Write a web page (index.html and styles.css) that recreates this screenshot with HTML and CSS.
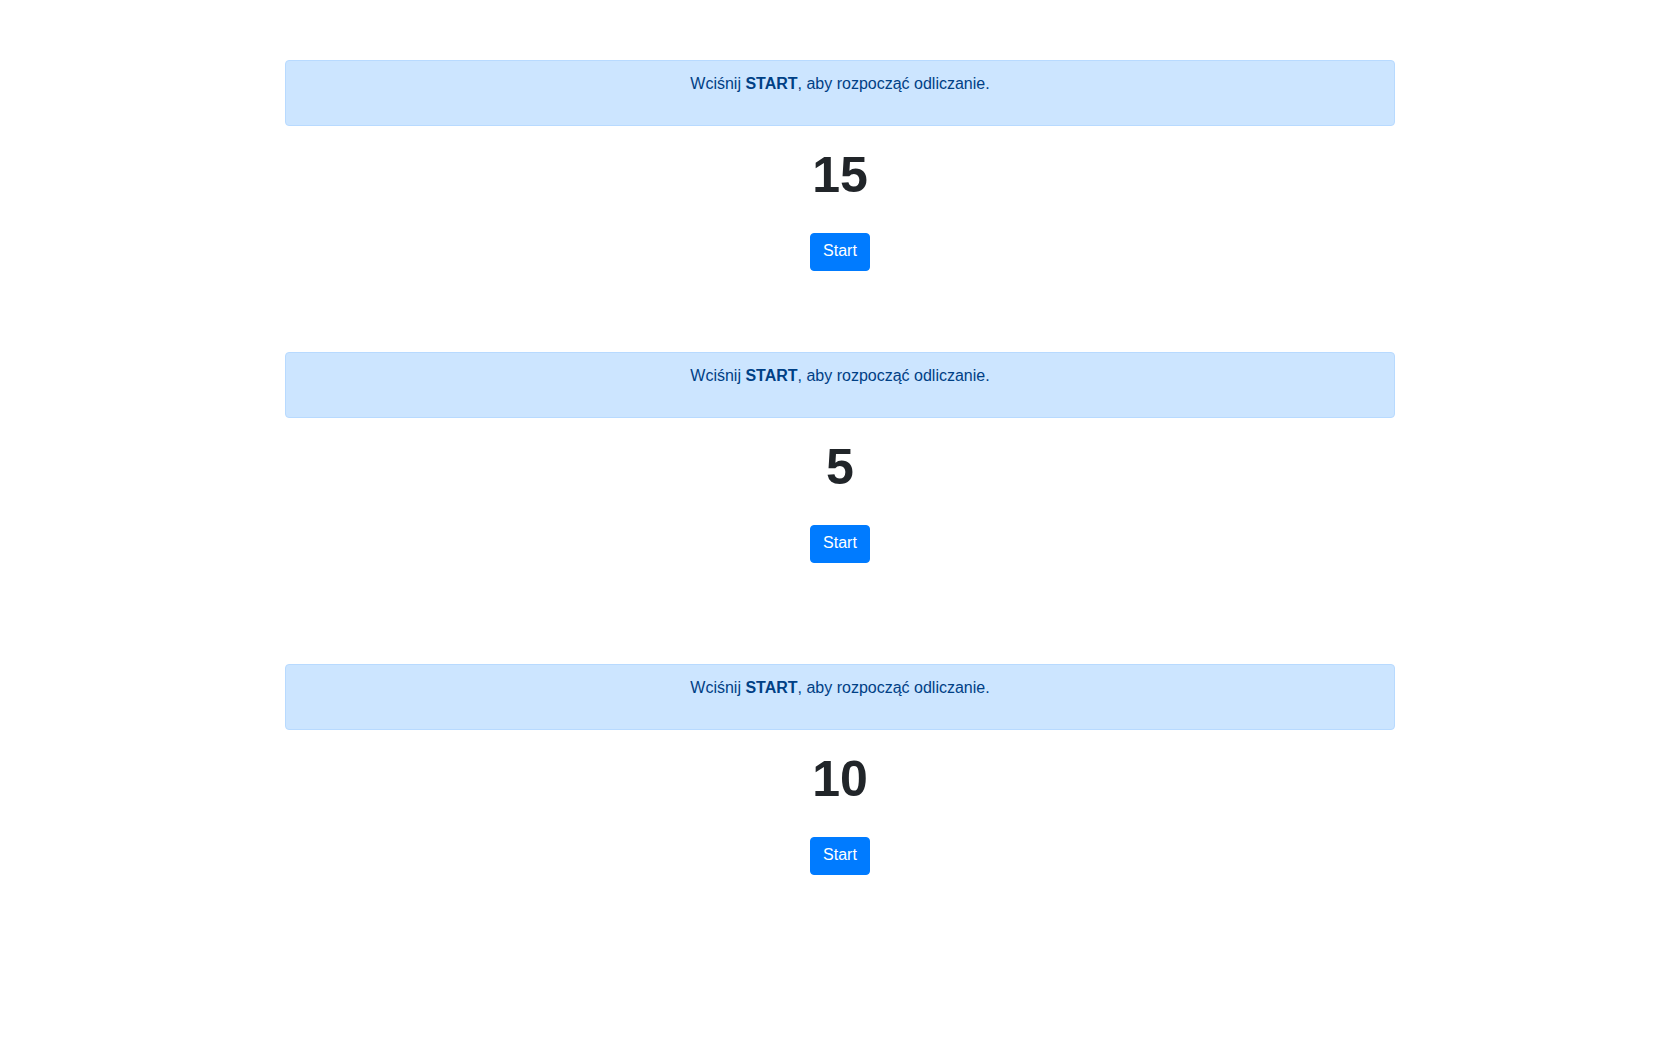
FILE: index.html
```html
<!DOCTYPE html>
<html lang="pl">
<head>
<meta charset="utf-8">
<title>Odliczanie</title>
<link rel="stylesheet" href="styles.css">
</head>
<body>
<main class="page">
  <section class="timer">
    <div class="alert"><p>Wciśnij <strong>START</strong>, aby rozpocząć odliczanie.</p></div>
    <h1 class="count">15</h1>
    <button class="btn" type="button">Start</button>
  </section>
  <section class="timer timer-second">
    <div class="alert"><p>Wciśnij <strong>START</strong>, aby rozpocząć odliczanie.</p></div>
    <h1 class="count">5</h1>
    <button class="btn" type="button">Start</button>
  </section>
  <section class="timer timer-third">
    <div class="alert"><p>Wciśnij <strong>START</strong>, aby rozpocząć odliczanie.</p></div>
    <h1 class="count">10</h1>
    <button class="btn" type="button">Start</button>
  </section>
</main>
</body>
</html>
```

FILE: styles.css
```css
html, body {
  margin: 0;
  padding: 0;
  background: #fff;
}
body {
  font-family: "Liberation Sans", Arial, sans-serif;
  font-size: 16px;
  line-height: 1.5;
  color: #212529;
}
.page {
  padding-top: 60px;
}
.timer {
  width: 1110px;
  margin: 0 auto;
  text-align: center;
}
.timer-second {
  margin-top: 81px;
}
.timer-third {
  margin-top: 101px;
}
.alert {
  padding: 11px 20px 13px;
  margin-bottom: 16px;
  border: 1px solid #b8daff;
  border-radius: 4px;
  background: #cce5ff;
  color: #004085;
}
.alert p {
  margin: 0 0 16px;
}
.alert strong {
  font-weight: 700;
}
.count {
  margin: 0 0 28px;
  padding-top: 3px;
  font-size: 50px;
  line-height: 1.2;
  font-weight: 700;
  color: #212529;
}
.btn {
  display: inline-block;
  padding: 5px 12px 7px;
  font-family: inherit;
  font-size: 16px;
  line-height: 24px;
  color: #fff;
  background: #007bff;
  border: 1px solid #007bff;
  border-radius: 4px;
  vertical-align: top;
  cursor: pointer;
}
```
